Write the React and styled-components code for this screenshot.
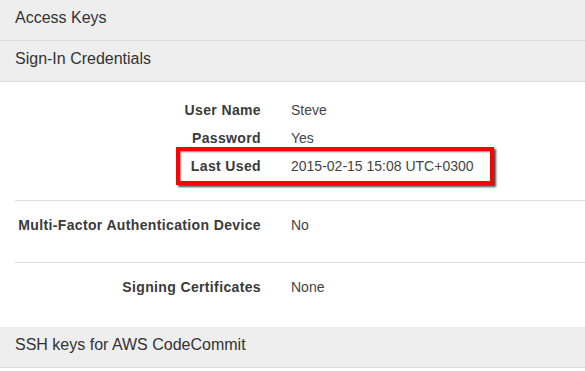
import React from 'react';
import styled, { createGlobalStyle } from 'styled-components';

const GlobalStyle = createGlobalStyle`
	body {
		margin: 0;
		background: #fff;
		font-family: Arial, "Liberation Sans", sans-serif;
		color: #444;
	}
`;

const Page = styled.div`
	width: 585px;
	height: 371px;
	overflow: hidden;
`;

const SectionHeader = styled.div`
	height: 40px;
	line-height: 36px;
	padding: 0 15px;
	background: #eee;
	border-bottom: 1px solid #ddd;
	font-size: 16px;
	color: #333;
`;

const Details = styled.div`
	padding-left: 15px;
`;

const Group = styled.div`
	padding: ${(p) => p.$pad};
	border-top: ${(p) => (p.$divided ? '1px solid #ddd' : 'none')};
`;

const Row = styled.div`
	position: relative;
	display: grid;
	grid-template-columns: 246px 1fr;
	column-gap: 30px;
	height: 28px;
	align-items: center;
	font-size: 14px;
`;

const Label = styled.div`
	text-align: right;
	font-weight: bold;
	letter-spacing: 0.36px;
	color: #3a3a3a;
`;

const Value = styled.div`
	color: #444;
`;

const Highlight = styled.div`
	position: absolute;
	left: 161px;
	top: -5px;
	width: 310px;
	height: 30px;
	border: 4px solid #f00;
	box-shadow: 2px 2px 2px rgba(0, 0, 0, 0.7), inset 1px 1px 2px rgba(0, 0, 0, 0.5);
	pointer-events: none;
`;

const credentials = [
	{ label: 'User Name', value: 'Steve' },
	{ label: 'Password', value: 'Yes' },
	{ label: 'Last Used', value: '2015-02-15 15:08 UTC+0300', marked: true },
];

const App = () => {
	return (
		<Page>
			<GlobalStyle />
			<SectionHeader>Access Keys</SectionHeader>
			<SectionHeader>Sign-In Credentials</SectionHeader>
			<Details>
				<Group $pad="14px 0 20px">
					{credentials.map((c) => (
						<Row key={c.label}>
							<Label>{c.label}</Label>
							<Value>{c.value}</Value>
							{c.marked && <Highlight />}
						</Row>
					))}
				</Group>
				<Group $divided $pad="10px 0 23px">
					<Row>
						<Label>Multi-Factor Authentication Device</Label>
						<Value>No</Value>
					</Row>
				</Group>
				<Group $divided $pad="10px 0 26px">
					<Row>
						<Label>Signing Certificates</Label>
						<Value>None</Value>
					</Row>
				</Group>
			</Details>
			<SectionHeader>SSH keys for AWS CodeCommit</SectionHeader>
		</Page>
	);
};

export default App;
